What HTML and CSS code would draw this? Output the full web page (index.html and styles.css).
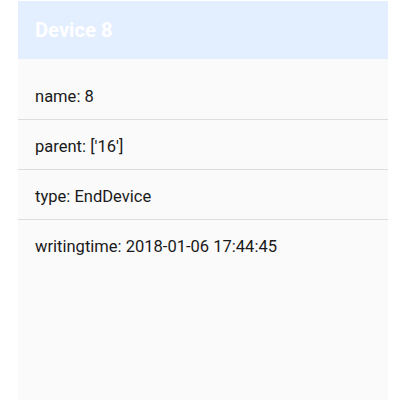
FILE: index.html
```html
<!DOCTYPE html>
<html>
<head>
<meta charset="utf-8">
<link rel="stylesheet" href="styles.css">
</head>
<body>
<div class="panel">
  <div class="header">Device 8</div>
  <ul class="list">
    <li class="item">name: 8</li>
    <li class="item">parent: ['16']</li>
    <li class="item">type: EndDevice</li>
    <li class="item last">writingtime: 2018-01-06 17:44:45</li>
  </ul>
</div>
</body>
</html>
```
FILE: styles.css
```css
html, body {
  margin: 0;
  padding: 0;
  background: #ffffff;
  height: 100%;
}
body {
  font-family: Roboto, "Noto Sans", sans-serif;
  padding-top: 1px;
  box-sizing: border-box;
}
.panel {
  margin-left: 18px;
  width: 370px;
  height: 100%;
  background: #fafafa;
}
.header {
  height: 58px;
  box-sizing: border-box;
  background: #e3eeff;
  color: #ffffff;
  font-weight: 700;
  font-size: 20.2px;
  padding-left: 17px;
  display: flex;
  align-items: center;
}
.list {
  list-style: none;
  margin: 0;
  padding: 11px 0 0 0;
}
.item {
  height: 50px;
  box-sizing: border-box;
  border-bottom: 1px solid #dedede;
  padding: 3px 0 0 17px;
  display: flex;
  align-items: center;
  font-size: 16.55px;
  color: #1a1a1a;
}
.item.last {
  border-bottom: none;
}
```
